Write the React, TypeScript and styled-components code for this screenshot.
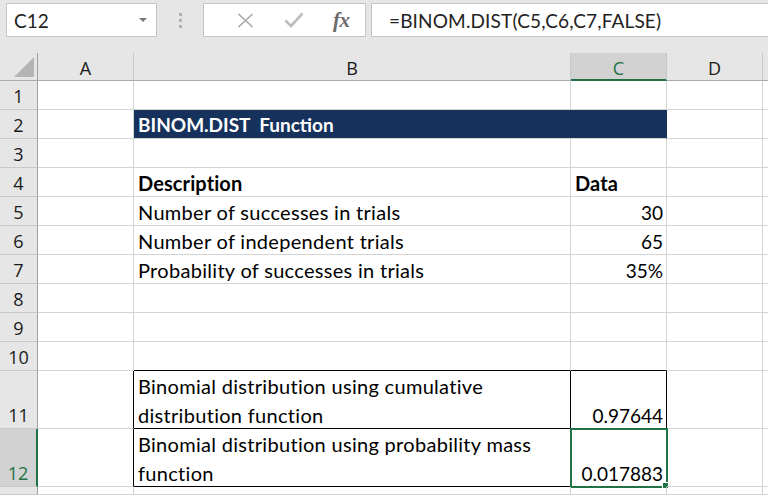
import React from 'react';
import styled, { createGlobalStyle, css } from 'styled-components';

const GlobalStyle = createGlobalStyle`
  html, body { margin: 0; padding: 0; background: #ffffff; overflow: hidden; }
  #root { width: 768px; height: 495px; }
`;

const CELL_FONT = `Lato, "Open Sans", sans-serif`;
const UI_FONT = `"Open Sans", "Noto Sans", sans-serif`;
const GREEN = '#217346';

const Window = styled.div`
  width: 768px;
  height: 495px;
  display: flex;
  flex-direction: column;
  background: #e6e6e6;
  overflow: hidden;
`;

const FormulaBar = styled.div`
  flex: none;
  height: 53px;
  box-sizing: border-box;
  padding: 3px 0 0 6px;
  display: flex;
  align-items: flex-start;
`;

const NameBox = styled.div`
  width: 151px;
  height: 34px;
  box-sizing: border-box;
  background: #fff;
  border: 1px solid #c6c6c6;
  display: flex;
  align-items: center;
  justify-content: space-between;
  padding: 0 9px 0 7px;
  font-family: ${CELL_FONT};
  font-size: 19px;
  color: #222;
`;

const DropArrow = styled.span`
  width: 0;
  height: 0;
  border-left: 4px solid transparent;
  border-right: 4px solid transparent;
  border-top: 4px solid #7a7a7a;
`;

const Grip = styled.div`
  width: 46px;
  height: 34px;
  display: flex;
  flex-direction: column;
  align-items: center;
  justify-content: center;
  gap: 3px;
`;

const GripDot = styled.span`
  width: 3px;
  height: 3px;
  background: #b3b3b3;
`;

const ButtonsBox = styled.div`
  width: 163px;
  height: 34px;
  box-sizing: border-box;
  background: #fff;
  border: 1px solid #c6c6c6;
  display: flex;
  align-items: center;
  padding-left: 18px;
`;

const IconSlot = styled.span`
  width: 54px;
  height: 32px;
  display: flex;
  align-items: center;
  justify-content: center;
`;

const Fx = styled.span`
  font-family: "Liberation Serif", "DejaVu Serif", serif;
  font-style: italic;
  font-weight: bold;
  font-size: 21px;
  color: #6b6b6b;
  letter-spacing: -0.5px;
`;

const FormulaInput = styled.div`
  flex: 1;
  margin-left: 5px;
  height: 34px;
  box-sizing: border-box;
  background: #fff;
  border: 1px solid #c6c6c6;
  border-right: none;
  display: flex;
  align-items: center;
  padding-left: 17px;
  font-family: ${CELL_FONT};
  font-size: 19px;
  letter-spacing: 0.15px;
  color: #222;
  white-space: nowrap;
`;

const Sheet = styled.div`
  flex: 1;
  display: grid;
  grid-template-columns: 38px 96px 437px 96px 96px 1fr;
  grid-template-rows: 28px repeat(10, 29px) 58px 58px 1fr;
  background: #fff;
`;

const Corner = styled.div`
  background: #e6e6e6;
  border-right: 1px solid #9f9f9f;
  border-bottom: 1px solid #ababab;
  box-sizing: border-box;
  position: relative;
  &::after {
    content: '';
    position: absolute;
    right: 3px;
    bottom: 3px;
    width: 0;
    height: 0;
    border-left: 20px solid transparent;
    border-bottom: 20px solid #b4b4b4;
  }
`;

const ColHead = styled.div<{ $active?: boolean }>`
  background: ${p => (p.$active ? '#d2d2d2' : '#e6e6e6')};
  color: ${p => (p.$active ? GREEN : '#1a1a1a')};
  border-right: 1px solid #c8c8c8;
  border-bottom: ${p => (p.$active ? `2px solid ${GREEN}` : '1px solid #ababab')};
  box-sizing: border-box;
  display: flex;
  align-items: center;
  justify-content: center;
  padding-top: ${p => (p.$active ? 3 : 2)}px;
  font-family: ${UI_FONT};
  font-size: 18px;
`;

const RowHead = styled.div<{ $active?: boolean }>`
  background: ${p => (p.$active ? '#d2d2d2' : '#e6e6e6')};
  color: ${p => (p.$active ? GREEN : '#1a1a1a')};
  border-right: ${p => (p.$active ? `2px solid ${GREEN}` : '1px solid #9f9f9f')};
  border-bottom: 1px solid #c8c8c8;
  box-sizing: border-box;
  display: flex;
  align-items: flex-end;
  justify-content: center;
  font-family: ${UI_FONT};
  font-size: 18px;
  line-height: 25px;
`;

const Cell = styled.div<{
  $span?: number;
  $title?: boolean;
  $bold?: boolean;
  $right?: boolean;
  $darkRight?: boolean;
  $darkBottom?: boolean;
  $selected?: boolean;
}>`
  grid-column: span ${p => p.$span || 1};
  box-sizing: border-box;
  border-right: 1px solid ${p => (p.$darkRight ? '#000' : '#d4d4d4')};
  border-bottom: 1px solid ${p => (p.$darkBottom ? '#000' : '#d4d4d4')};
  display: flex;
  flex-direction: column;
  justify-content: flex-end;
  align-items: ${p => (p.$right ? 'flex-end' : 'flex-start')};
  padding: 0 3px 0 4px;
  font-family: ${CELL_FONT};
  font-size: ${p => (p.$right ? 19 : 20)}px;
  letter-spacing: ${p => (p.$right ? 0 : p.$bold ? 0.1 : 0.3)}px;
  line-height: 29px;
  font-weight: ${p => (p.$bold ? 700 : 400)};
  color: #000;
  white-space: pre;
  position: relative;
  ${p =>
    p.$title &&
    css`
      background: #16325c;
      color: #fff;
      font-size: 19px;
      letter-spacing: 0;
      border-right-color: #16325c;
    `}
  ${p =>
    p.$selected &&
    css`
      outline: 2px solid ${GREEN};
      outline-offset: -1px;
      &::after {
        content: '';
        position: absolute;
        right: -3px;
        bottom: -3px;
        width: 5px;
        height: 5px;
        background: ${GREEN};
        border: 1px solid #fff;
      }
    `}
`;

const Lines = styled.div<{ $shift: number }>`
  display: flex;
  flex-direction: column;
  align-items: inherit;
  margin-bottom: -${p => p.$shift}px;
`;

type RowDef = {
  n: number;
  title?: string;
  b?: string[];
  c?: string;
  bold?: boolean;
  boxed?: boolean;
  boxTop?: boolean;
  selected?: boolean;
  hideNumber?: boolean;
};

const rows: RowDef[] = [
  { n: 1 },
  { n: 2, title: 'BINOM.DIST  Function' },
  { n: 3 },
  { n: 4, b: ['Description'], c: 'Data', bold: true },
  { n: 5, b: ['Number of successes in trials'], c: '30' },
  { n: 6, b: ['Number of independent trials'], c: '65' },
  { n: 7, b: ['Probability of successes in trials'], c: '35%' },
  { n: 8 },
  { n: 9 },
  { n: 10, boxTop: true },
  { n: 11, b: ['Binomial distribution using cumulative', 'distribution function'], c: '0.97644', boxed: true },
  { n: 12, b: ['Binomial distribution using probability mass', 'function'], c: '0.017883', boxed: true, selected: true },
  { n: 13, hideNumber: true },
];

const columns = ['A', 'B', 'C', 'D', ''];

const CrossIcon = () => (
  <svg width="17" height="15" viewBox="0 0 17 15">
    <path d="M1.5 1 L15.5 14 M15.5 1 L1.5 14" stroke="#a8a8a8" strokeWidth="1.6" fill="none" />
  </svg>
);

const CheckIcon = () => (
  <svg width="20" height="16" viewBox="0 0 20 16">
    <path d="M1.5 8.5 L7 14 L18.5 1.5" stroke="#bdbdbd" strokeWidth="2.6" fill="none" />
  </svg>
);

export default function App() {
  return (
    <Window>
      <GlobalStyle />
      <FormulaBar>
        <NameBox>
          <span>C12</span>
          <DropArrow />
        </NameBox>
        <Grip>
          <GripDot />
          <GripDot />
          <GripDot />
        </Grip>
        <ButtonsBox>
          <IconSlot>
            <CrossIcon />
          </IconSlot>
          <IconSlot>
            <CheckIcon />
          </IconSlot>
          <IconSlot>
            <Fx>fx</Fx>
          </IconSlot>
        </ButtonsBox>
        <FormulaInput>=BINOM.DIST(C5,C6,C7,FALSE)</FormulaInput>
      </FormulaBar>
      <Sheet>
        <Corner />
        {columns.map((c, i) => (
          <ColHead key={i} $active={c === 'C'}>
            {c}
          </ColHead>
        ))}
        {rows.map(r => (
          <React.Fragment key={r.n}>
            <RowHead $active={r.selected}>{r.hideNumber ? '' : r.n}</RowHead>
            <Cell $darkRight={r.boxed} />
            {r.title ? (
              <Cell $span={2} $title $bold>
                <Lines $shift={1}>{r.title}</Lines>
              </Cell>
            ) : (
              <>
                <Cell $bold={r.bold} $darkRight={r.boxed} $darkBottom={r.boxed || r.boxTop}>
                  {r.b && (
                    <Lines $shift={2}>
                      {r.b.map((line, i) => (
                        <span key={i}>{line}</span>
                      ))}
                    </Lines>
                  )}
                </Cell>
                <Cell
                  $bold={r.bold}
                  $right={!r.bold}
                  $darkRight={r.boxed}
                  $darkBottom={r.boxed || r.boxTop}
                  $selected={r.selected}
                >
                  {r.c && <Lines $shift={2}>{r.c}</Lines>}
                </Cell>
              </>
            )}
            <Cell />
            <Cell />
          </React.Fragment>
        ))}
      </Sheet>
    </Window>
  );
}
